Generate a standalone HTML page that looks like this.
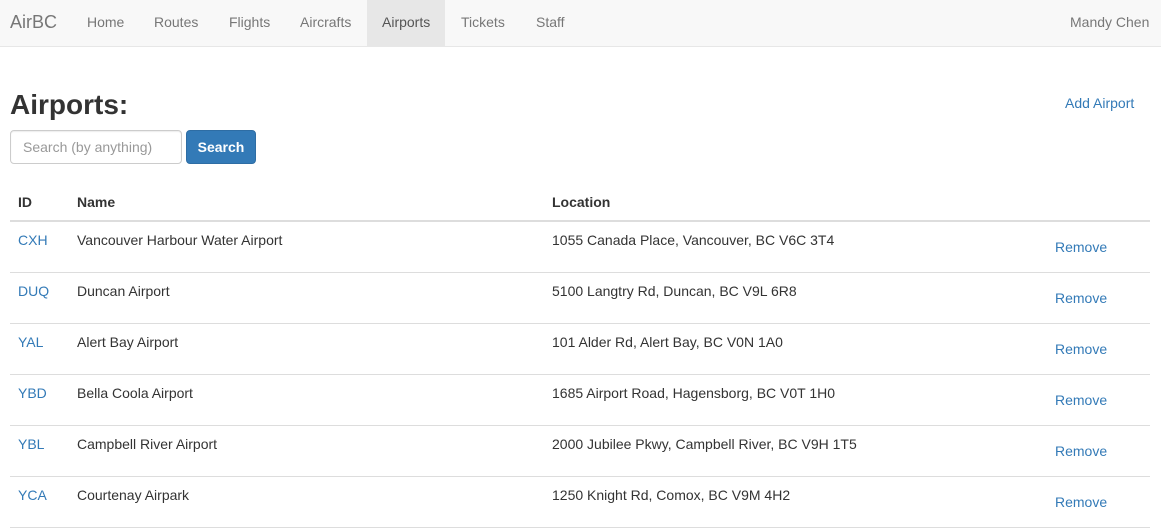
<!DOCTYPE html>
<html><head><meta charset="utf-8"><style>
*{box-sizing:border-box}
body{margin:0;font-family:"Liberation Sans",Helvetica,Arial,sans-serif;font-size:14px;color:#333;background:#fff;width:1161px;height:522px;overflow:hidden}
.nav{height:47px;background:#f8f8f8;border-bottom:1px solid #e7e7e7;position:relative}
.nav a{position:absolute;top:0;height:46px;line-height:44px;color:#777;text-decoration:none}
.brand{font-size:18px;left:10px}
.act{background:#e7e7e7;color:#555!important;padding:0 15px}
h1{position:absolute;left:10px;top:85px;margin:0;font-size:28px;font-weight:bold;line-height:40px}
.add{position:absolute;left:1065px;top:95px;color:#337ab7}
.inp{position:absolute;left:10px;top:130px;width:172px;height:34px;border:1px solid #ccc;border-radius:4px;padding:0 12px;line-height:32px;color:#999;box-shadow:inset 0 1px 1px rgba(0,0,0,.075)}
.btn{position:absolute;left:186px;top:130px;width:70px;height:34px;background:#337ab7;border:1px solid #2e6da4;border-radius:4px;color:#fff;line-height:32px;text-align:center;font-weight:bold}
table{position:absolute;left:10px;top:184px;width:1140px;border-collapse:collapse}
th{text-align:left;padding:8px;line-height:20px;border-bottom:2px solid #ddd;font-weight:bold}
td{padding:8px;line-height:20px;vertical-align:top;border-bottom:1px solid #ddd}
td a{color:#337ab7;text-decoration:none}
.rm{display:inline-block;padding:7px 12px 7px 12px;line-height:20px;color:#337ab7}
td.r{padding:8px 0 8px 29px}
</style></head><body>
<div class="nav">
<a class="brand">AirBC</a>
<a style="left:87px">Home</a>
<a style="left:154px">Routes</a>
<a style="left:229px">Flights</a>
<a style="left:300px">Aircrafts</a>
<a class="act" style="left:367px">Airports</a>
<a style="left:461px">Tickets</a>
<a style="left:536px">Staff</a>
<a style="left:1070px">Mandy Chen</a>
</div>
<h1>Airports:</h1>
<a class="add">Add Airport</a>
<div class="inp">Search (by anything)</div>
<div class="btn">Search</div>
<table>
<tr><th style="width:59px">ID</th><th style="width:475px">Name</th><th style="width:470px">Location</th><th></th></tr>
<tr><td><a>CXH</a></td><td>Vancouver Harbour Water Airport</td><td>1055 Canada Place, Vancouver, BC V6C 3T4</td><td class="r"><span class="rm">Remove</span></td></tr>
<tr><td><a>DUQ</a></td><td>Duncan Airport</td><td>5100 Langtry Rd, Duncan, BC V9L 6R8</td><td class="r"><span class="rm">Remove</span></td></tr>
<tr><td><a>YAL</a></td><td>Alert Bay Airport</td><td>101 Alder Rd, Alert Bay, BC V0N 1A0</td><td class="r"><span class="rm">Remove</span></td></tr>
<tr><td><a>YBD</a></td><td>Bella Coola Airport</td><td>1685 Airport Road, Hagensborg, BC V0T 1H0</td><td class="r"><span class="rm">Remove</span></td></tr>
<tr><td><a>YBL</a></td><td>Campbell River Airport</td><td>2000 Jubilee Pkwy, Campbell River, BC V9H 1T5</td><td class="r"><span class="rm">Remove</span></td></tr>
<tr><td><a>YCA</a></td><td>Courtenay Airpark</td><td>1250 Knight Rd, Comox, BC V9M 4H2</td><td class="r"><span class="rm">Remove</span></td></tr>
</table>
</body></html>
